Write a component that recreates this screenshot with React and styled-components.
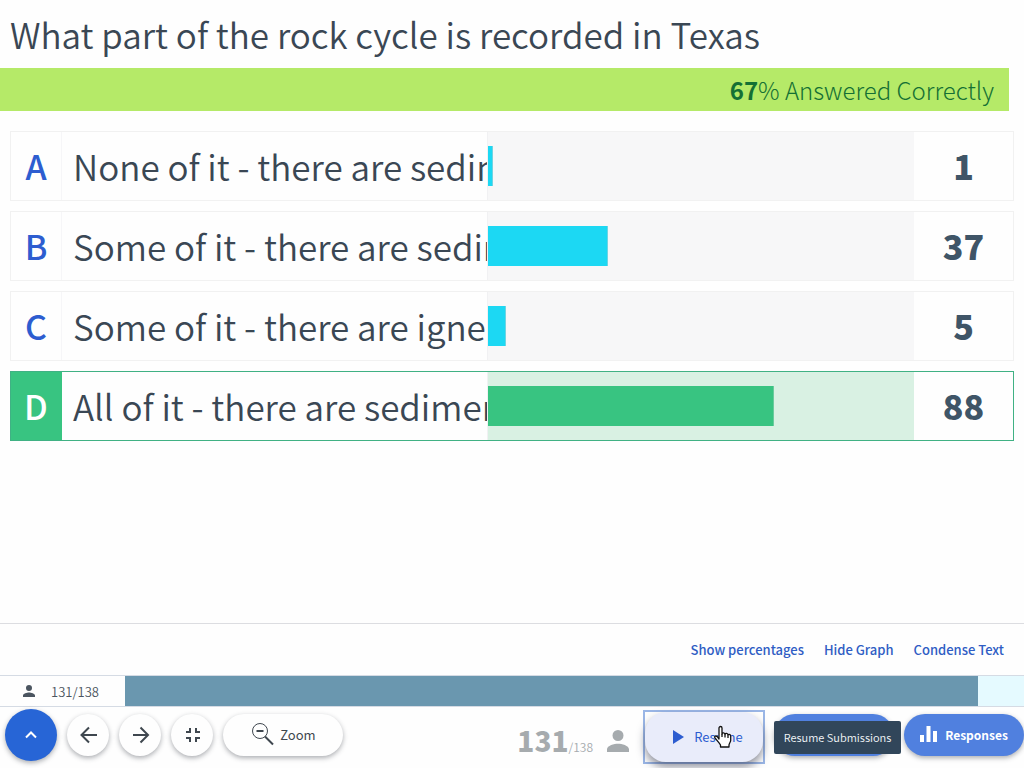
import React from "react";
import styled, { createGlobalStyle, css } from "styled-components";

const GlobalStyle = createGlobalStyle`
  * { box-sizing: border-box; }
  body {
    margin: 0;
    background: #fefefe;
    color: #3a4754;
    font-family: "Noto Sans CJK SC", "Noto Sans", sans-serif;
  }
  button { font-family: inherit; cursor: pointer; }
`;

const Page = styled.div`
  min-height: 100vh;
  display: flex;
  flex-direction: column;
  overflow: hidden;
`;

const Results = styled.main`
  flex: 1;
`;

const Title = styled.h1`
  margin: 0;
  padding: 10px;
  font-size: 35px;
  line-height: 48px;
  font-weight: 350;
`;

const Banner = styled.div`
  margin-right: 15px;
  padding-right: 15px;
  background: #b5ea68;
  color: #147034;
  font-size: 24px;
  font-weight: 300;
  line-height: 43px;
  text-align: right;
  strong { font-weight: 700; }
`;

const AnswerList = styled.ul`
  list-style: none;
  margin: 0;
  padding: 20px 10px;
  display: flex;
  flex-direction: column;
  gap: 10px;
`;

const Answer = styled.li`
  display: grid;
  grid-template-columns: 51px minmax(0, 425fr) minmax(0, 427fr) 99px;
  height: 70px;
  border: 1px solid ${(p) => (p.$correct ? "#40b184" : "#f1f1f1")};
  background: #fefefe;
  line-height: 68px;
`;

const Letter = styled.span`
  border-right: 1px solid ${(p) => (p.$correct ? "#38c481" : "#f6f6f8")};
  background: ${(p) => (p.$correct ? "#38c481" : "transparent")};
  color: ${(p) => (p.$correct ? "#fff" : "#2d5dd0")};
  font-size: 34px;
  font-weight: 500;
  text-align: center;
`;

const AnswerText = styled.span`
  padding-left: 11px;
  font-size: 35px;
  font-weight: 350;
  white-space: nowrap;
  overflow: hidden;
`;

const Graph = styled.span`
  display: flex;
  align-items: center;
  border-left: 1px solid #f1f1f3;
  background: ${(p) => (p.$correct ? "#d9f1e3" : "#f7f7f8")};
`;

const GraphBar = styled.span`
  box-sizing: content-box;
  height: 40px;
  background: ${(p) => (p.$correct ? "#38c481" : "#1cd8f3")};
  border-right: 1px solid ${(p) => (p.$correct ? "#6bcb9d" : "#6fd4e2")};
`;

const Count = styled.span`
  color: #3f5567;
  font-size: 34px;
  font-weight: 900;
  text-align: center;
`;

const ViewOptions = styled.nav`
  display: flex;
  justify-content: flex-end;
  align-items: center;
  gap: 20px;
  height: 52px;
  padding: 0 20px;
  border-top: 1px solid #dcdde1;
`;

const TextLink = styled.a`
  color: #2f5dc4;
  font-size: 13px;
  line-height: 20px;
  font-weight: 500;
  text-decoration: none;
`;

const ProgressStrip = styled.div`
  display: flex;
  height: 32px;
  border-top: 1px solid #d5dbe4;
  border-bottom: 1px solid #d5dbe4;
`;

const StripCount = styled.div`
  flex: 0 0 125px;
  display: flex;
  align-items: center;
  gap: 16px;
  padding-left: 23px;
  font-size: 13px;
  font-weight: 350;
  color: #4b5560;
`;

const Track = styled.div`
  flex: 1;
  background: #e5faff;
`;

const TrackFill = styled.div`
  height: 100%;
  background: #6a97af;
`;

const Toolbar = styled.footer`
  display: flex;
  align-items: center;
  height: 61px;
  padding: 0 0 5px 5px;
  gap: 10px;
`;

const lifted = css`
  border: 0;
  background: #fefefe;
  color: #3f474f;
  box-shadow: 0 2px 5px rgba(40, 44, 55, 0.38);
`;

const RoundButton = styled.button`
  ${lifted}
  display: grid;
  place-items: center;
  flex: none;
  padding: 0;
  border-radius: 50%;
  width: ${(p) => (p.$primary ? 52 : 42)}px;
  height: ${(p) => (p.$primary ? 52 : 42)}px;
  ${(p) => p.$primary && "background: #2765d6; color: #fff;"}
`;

const PillButton = styled.button`
  ${lifted}
  display: flex;
  align-items: center;
  justify-content: center;
  gap: 6px;
  flex: none;
  width: 120px;
  height: 42px;
  padding: 0 0 2px;
  border-radius: 21px;
  font-size: 13px;
  font-weight: 400;
  ${(p) => p.$blue && "background: #5080df; color: #fff; font-size: 12px; font-weight: 700; gap: 8px;"}
`;

const RightTools = styled.div`
  display: flex;
  align-items: center;
  margin-left: auto;
`;

const Tally = styled.div`
  display: flex;
  align-items: center;
  gap: 14px;
  padding-top: 12px;
  margin-right: 14px;
  color: #a6abae;
`;

const TallyText = styled.div`
  padding-top: 4px;
  font-size: 12px;
  font-weight: 350;
  line-height: 40px;
  strong { font-size: 28px; font-weight: 900; }
`;

const ResumeButton = styled.button`
  position: relative;
  display: flex;
  align-items: center;
  justify-content: center;
  gap: 10px;
  width: 118px;
  height: 50px;
  padding: 0 0 0 8px;
  border: 0;
  border-radius: 21px;
  background: #e9ecfa;
  color: #2d5dd0;
  font-size: 13px;
  font-weight: 400;
  box-shadow: 0 5px 9px rgba(40, 44, 65, 0.5);
`;

const FocusFrame = styled.div`
  flex: none;
  margin: 3px 9px 0 0;
  border: 2px solid #9ab6e6;
`;

const Pointer = styled.svg`
  position: absolute;
  left: 68px;
  top: 13px;
`;

const TipAnchor = styled.div`
  position: relative;
  margin-right: 10px;
`;

const Tooltip = styled.div`
  position: absolute;
  left: 0;
  top: 7px;
  width: 127px;
  border-radius: 2px;
  background: #31465a;
  color: #f3f6f9;
  font-size: 11px;
  font-weight: 350;
  line-height: 33px;
  text-align: center;
  white-space: nowrap;
`;

const PersonIcon = ({ size }) => (
  <svg width={size} height={size} viewBox="4 4 16 16" fill="currentColor" aria-hidden="true">
    <path d="M12 12a4 4 0 1 0 0-8 4 4 0 0 0 0 8zm0 2c-2.700 0-8 1.300-8 4v2h16v-2c0-2.700-5.300-4-8-4z" />
  </svg>
);

const StrokeIcon = ({ size = 24, width = 2, children }) => (
  <svg width={size} height={size} viewBox="0 0 24 24" fill="none" stroke="currentColor" strokeWidth={width} aria-hidden="true">
    {children}
  </svg>
);

const answers = [
  { letter: "A", text: "None of it - there are sedimentary rocks", count: 1 },
  { letter: "B", text: "Some of it - there are sedimentary rocks", count: 37 },
  { letter: "C", text: "Some of it - there are igneous rocks", count: 5 },
  { letter: "D", text: "All of it - there are sedimentary rocks", count: 88, correct: true },
];
const submitted = 131;
const enrolled = 138;

export default function App() {
  return (
    <Page>
      <GlobalStyle />
      <Results>
        <Title>What part of the rock cycle is recorded in Texas</Title>
        <Banner><strong>67</strong>% Answered Correctly</Banner>
        <AnswerList>
          {answers.map((a) => (
            <Answer key={a.letter} $correct={a.correct}>
              <Letter $correct={a.correct}>{a.letter}</Letter>
              <AnswerText>{a.text}</AnswerText>
              <Graph $correct={a.correct}>
                <GraphBar $correct={a.correct} style={{ width: `${Math.round((a.count / submitted) * 100)}%` }} />
              </Graph>
              <Count>{a.count}</Count>
            </Answer>
          ))}
        </AnswerList>
      </Results>

      <ViewOptions>
        <TextLink href="#percentages">Show percentages</TextLink>
        <TextLink href="#graph">Hide Graph</TextLink>
        <TextLink href="#condense">Condense Text</TextLink>
      </ViewOptions>

      <ProgressStrip>
        <StripCount><PersonIcon size={12} />{submitted}/{enrolled}</StripCount>
        <Track><TrackFill style={{ width: `${(submitted / enrolled) * 100}%` }} /></Track>
      </ProgressStrip>

      <Toolbar>
        <RoundButton $primary aria-label="Expand">
          <StrokeIcon><path d="M7 14.500l5-5 5 5" /></StrokeIcon>
        </RoundButton>
        <RoundButton aria-label="Previous">
          <StrokeIcon><path d="M21 12H6M13 4.500L5.500 12l7.500 7.500" /></StrokeIcon>
        </RoundButton>
        <RoundButton aria-label="Next">
          <StrokeIcon><path d="M5 12h15M12.500 4.500l7.500 7.500-7.500 7.500" /></StrokeIcon>
        </RoundButton>
        <RoundButton aria-label="Exit full screen">
          <StrokeIcon><path d="M6 9h4V5M20 9h-4V5M6 15h4v4M20 15h-4v4" /></StrokeIcon>
        </RoundButton>
        <PillButton>
          <StrokeIcon width={1}>
            <circle cx="10" cy="9" r="7.500" />
            <path d="M6.500 9h7" strokeWidth="2" />
            <path d="M15 14.500l8 8" strokeWidth="2" />
          </StrokeIcon>
          Zoom
        </PillButton>

        <RightTools>
          <Tally>
            <TallyText><strong>{submitted}</strong>/{enrolled}</TallyText>
            <PersonIcon size={22} />
          </Tally>
          <FocusFrame>
            <ResumeButton>
              <svg width="11" height="14" viewBox="0 0 11 14" fill="currentColor" aria-hidden="true">
                <path d="M0 0l11 7-11 7z" />
              </svg>
              Resume
              <Pointer width="20" height="24" viewBox="0 0 20 24" fill="#fff" stroke="#111" strokeWidth="1.300" strokeLinejoin="round" aria-hidden="true">
                <path d="M6 14V3c0-2 3-2 3 0v6c0-1.500 3-1.500 3 .5 0-1.500 3-1.500 3 .7 0-1.300 2.700-1.300 2.700 1v4.300c0 1.500-1.700 3-1.700 4.500v2H7.500v-2c-1-2-3.500-4.500-5.500-7-1.200-1.700 1-2.700 2.300-1.300z" />
                <path d="M9 9v3M12 9.500v3M15 10.200v2.800" fill="none" />
              </Pointer>
            </ResumeButton>
          </FocusFrame>
          <TipAnchor>
            <PillButton $blue aria-label="Correct answer" />
            <Tooltip role="tooltip">Resume Submissions</Tooltip>
          </TipAnchor>
          <PillButton $blue>
            <svg width="17" height="16" viewBox="0 0 17 16" fill="currentColor" aria-hidden="true">
              <path d="M0 9h4v7H0zM6.500 0h4v16h-4zM13 5h4v11h-4z" />
            </svg>
            Responses
          </PillButton>
        </RightTools>
      </Toolbar>
    </Page>
  );
}
